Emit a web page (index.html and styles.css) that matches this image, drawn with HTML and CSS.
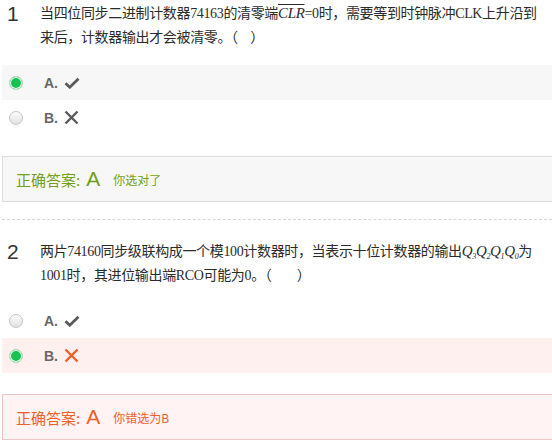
FILE: index.html
```html
<!DOCTYPE html>
<html>
<head>
<meta charset="utf-8">
<link rel="stylesheet" href="styles.css">
</head>
<body>
<div class="page">
  <div class="question first">
    <div class="title">
      <div class="num">1</div>
      <div class="text">当四位同步二进制计数器74163的清零端<span class="var over">CLR</span>=0时，需要等到时钟脉冲CLK上升沿到来后，计数器输出才会被清零。（&nbsp;&nbsp;&nbsp;&nbsp;）</div>
    </div>
    <div class="options">
      <div class="opt opt-checked">
        <span class="radio on"></span>
        <span class="label">A.</span>
        <svg class="icon" width="16" height="12" viewBox="0 0 16 12"><path d="M1.5 6.2 L5.8 10.2 L14.5 1.8" fill="none" stroke="#595959" stroke-width="2.8" stroke-linejoin="miter"/></svg>
      </div>
      <div class="opt">
        <span class="radio"></span>
        <span class="label">B.</span>
        <svg class="icon" width="15" height="15" viewBox="0 0 15 15"><path d="M1.5 1.5 L13.5 13.5 M13.5 1.5 L1.5 13.5" fill="none" stroke="#595959" stroke-width="2.4"/></svg>
      </div>
    </div>
    <div class="answer ok">
      <span class="ans-label">正确答案:</span><span class="ans-letter">A</span><span class="ans-note">你选对了</span>
    </div>
  </div>
  <div class="question">
    <div class="title">
      <div class="num">2</div>
      <div class="text">两片74160同步级联构成一个模100计数器时，当表示十位计数器的输出<span class="var">Q<sub>3</sub>Q<sub>2</sub>Q<sub>1</sub>Q<sub>0</sub></span>为1001时，其进位输出端RCO可能为0。（&nbsp;&nbsp;&nbsp;&nbsp;&nbsp;&nbsp;&nbsp;&nbsp;）</div>
    </div>
    <div class="options">
      <div class="opt">
        <span class="radio"></span>
        <span class="label">A.</span>
        <svg class="icon" width="16" height="12" viewBox="0 0 16 12"><path d="M1.5 6.2 L5.8 10.2 L14.5 1.8" fill="none" stroke="#595959" stroke-width="2.8" stroke-linejoin="miter"/></svg>
      </div>
      <div class="opt opt-wrong">
        <span class="radio on"></span>
        <span class="label">B.</span>
        <svg class="icon" width="15" height="15" viewBox="0 0 15 15"><path d="M1.5 1.5 L13.5 13.5 M13.5 1.5 L1.5 13.5" fill="none" stroke="#f0602a" stroke-width="2.4"/></svg>
      </div>
    </div>
    <div class="answer bad">
      <span class="ans-label">正确答案:</span><span class="ans-letter">A</span><span class="ans-note">你错选为B</span>
    </div>
  </div>
</div>
</body>
</html>
```
FILE: styles.css
```css
html, body {
  margin: 0;
  padding: 0;
  background: #fff;
  overflow: hidden;
}
.page {
  width: 560px;
  padding-left: 2px;
}
.question {
  padding-top: 19px;
}
.question.first {
  padding-top: 1px;
  padding-bottom: 17px;
  border-bottom: 1px dashed #d6d6d6;
}
.title {
  display: flex;
  align-items: flex-start;
}
.num {
  width: 33px;
  padding-left: 5px;
  font-family: "Liberation Sans", Arial, sans-serif;
  font-size: 21px;
  line-height: 26px;
  color: #333;
  flex: none;
}
.text {
  width: 503px;
  font-family: "Liberation Serif", "Noto Sans CJK SC", serif;
  font-size: 14px;
  line-height: 24px;
  letter-spacing: -0.35px;
  color: #2b2b2b;
}
.var {
  font-style: italic;
  font-size: 15px;
}
.over {
  text-decoration: overline;
}
.var sub {
  font-size: 8px;
  vertical-align: -3px;
  line-height: 0;
}
.options {
  margin-top: 15px;
}
.opt {
  display: flex;
  align-items: center;
  height: 35px;
  padding-left: 7px;
}
.opt-checked {
  background: #f7f7f7;
}
.opt-wrong {
  background: #fff0f0;
}
.radio {
  width: 12px;
  height: 12px;
  border-radius: 50%;
  border: 1px solid #c4c4c4;
  background: linear-gradient(#fafafa, #e2e2e2);
  flex: none;
}
.radio.on {
  background: #17c152;
  border-color: #b9dcc3;
  box-shadow: inset 0 0 0 1px #fff;
}
.label {
  margin-left: 21px;
  font-family: "Liberation Sans", Arial, sans-serif;
  font-size: 14px;
  font-weight: bold;
  color: #666;
}
.icon {
  margin-left: 6px;
  display: block;
}
.answer {
  margin-top: 21px;
  height: 44px;
  display: flex;
  align-items: center;
  padding-left: 13px;
  border: 1px solid #dcdcdc;
  background: #f7f7f7;
}
.answer.ok {
  color: #72a016;
}
.answer.bad {
  color: #f0602a;
  background: #fff3f3;
  border-color: #eec6c6;
}
.ans-label {
  font-family: "Noto Sans CJK SC", sans-serif;
  font-size: 15px;
}
.ans-letter {
  font-family: "Liberation Sans", Arial, sans-serif;
  font-size: 21px;
  margin-left: 6px;
}
.ans-note {
  font-family: "Noto Sans CJK SC", sans-serif;
  font-size: 12px;
  margin-left: 13px;
}
```
